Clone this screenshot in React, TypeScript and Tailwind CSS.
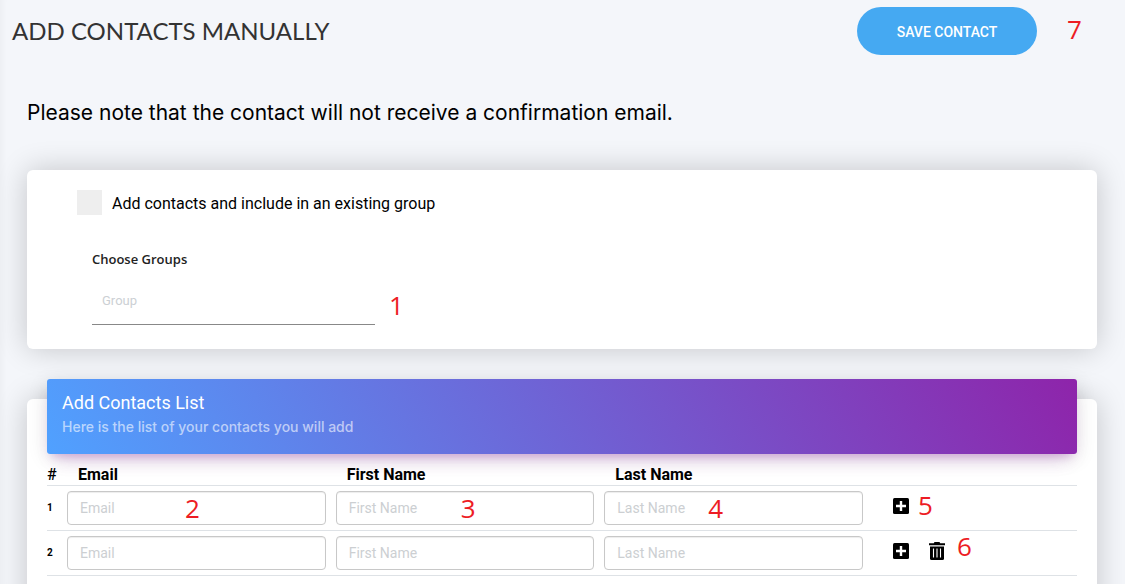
import { useState } from 'react';

type Contact = { id: number; email: string; first: string; last: string };

function Marker({ value, className }: { value: number; className: string }) {
  return (
    <span
      className={`pointer-events-none absolute font-['Open_Sans',sans-serif] text-[26px] leading-[26px] text-[#ed1c24] ${className}`}
    >
      {value}
    </span>
  );
}

function PlusSquare() {
  return (
    <svg viewBox="0 0 16 16" className="size-4" aria-hidden="true">
      <rect width="16" height="16" rx="1.5" fill="#000" />
      <path d="M6.8 3h2.4v3.8H13v2.4H9.2V13H6.8V9.2H3V6.8h3.8z" fill="#fff" />
    </svg>
  );
}

function Trash() {
  return (
    <svg viewBox="0 0 16 18" className="h-[18px] w-4" aria-hidden="true">
      <path d="M5.5 0h5l.7 1.2H16v2H0v-2h4.8z" fill="#000" />
      <path d="M1 4.6h14V16.5a1.5 1.5 0 0 1-1.5 1.5h-11A1.5 1.5 0 0 1 1 16.5z" fill="#000" />
      <path d="M4.5 6.6v9M8 6.6v9M11.5 6.6v9" stroke="#fff" strokeWidth="1.1" />
    </svg>
  );
}

const fieldClass =
  "block h-[34px] w-full rounded border border-[#c8c8c8] bg-white px-3 font-[Roboto,sans-serif] text-sm text-[#555] shadow-[inset_0_1px_1px_rgba(0,0,0,0.075)] outline-none placeholder:text-[#cccfd2]";

export default function App() {
  const [rows, setRows] = useState<Contact[]>([
    { id: 1, email: '', first: '', last: '' },
    { id: 2, email: '', first: '', last: '' },
  ]);

  const update = (id: number, key: 'email' | 'first' | 'last', value: string) =>
    setRows((list) => list.map((r) => (r.id === id ? { ...r, [key]: value } : r)));
  const add = () =>
    setRows((list) => [...list, { id: Math.max(...list.map((r) => r.id)) + 1, email: '', first: '', last: '' }]);
  const remove = (id: number) => setRows((list) => list.filter((r) => r.id !== id));

  return (
    <div className="h-screen overflow-hidden bg-[#f4f6fa] font-[Roboto,sans-serif] text-black shadow-[inset_8px_0_8px_-8px_rgba(0,0,0,0.06)]">
      <header className="flex items-start justify-between pt-[7px] pr-[88px] pl-3">
        <h1 className="font-[Lato,sans-serif] text-2xl leading-[48px] text-[#333]">ADD CONTACTS MANUALLY</h1>
        <div className="relative">
          <button
            type="button"
            className="h-12 w-[180px] rounded-full bg-[#45a9f2] pt-0.5 text-sm font-medium text-white"
          >
            SAVE CONTACT
          </button>
          <Marker value={7} className="top-[9px] left-[210px]" />
        </div>
      </header>

      <main className="pt-11 pr-7 pl-[27px]">
        <p className="font-[Inter,sans-serif] text-[21px] leading-7">
          Please note that the contact will not receive a confirmation email.
        </p>

        <section className="mt-[43px] rounded-md bg-white px-[50px] pt-5 pb-6 shadow-[0_0_30px_rgba(0,0,0,0.2)]">
          <label className="flex items-start gap-2.5 text-base">
            <input type="checkbox" className="size-[25px] appearance-none bg-[#eee] checked:bg-[#45a9f2]" />
            <span className="pt-0.5 leading-6">Add contacts and include in an existing group</span>
          </label>
          <div className="relative mt-[33px] ml-[15px] w-[283px]">
            <label
              htmlFor="group"
              className="block font-['Open_Sans',sans-serif] text-[13px] leading-5 font-semibold text-[#222]"
            >
              Choose Groups
            </label>
            <input
              id="group"
              placeholder="Group"
              className="mt-1.5 block h-[50px] w-full border-b border-[#888] px-2.5 pt-0.5 text-[13px] outline-none placeholder:text-[#ccd0d4]"
            />
            <Marker value={1} className="top-[43px] left-[297px]" />
          </div>
        </section>

        <section className="mt-[50px] rounded-md bg-white px-5 pb-10 shadow-[0_0_30px_rgba(0,0,0,0.2)]">
          <div className="relative -top-5 -mb-5 h-[75px] rounded-[3px] bg-linear-60/srgb from-[#50a1ff] to-[#8e24aa] px-[15px] pt-3 shadow-[0_12px_20px_-10px_rgba(156,39,176,0.28),0_4px_20px_0_rgba(0,0,0,0.12),0_7px_8px_-5px_rgba(156,39,176,0.2)]">
            <h2 className="text-lg leading-6 text-white">Add Contacts List</h2>
            <p className="font-[Inter,sans-serif] text-sm leading-6 font-medium text-white/60">
              Here is the list of your contacts you will add
            </p>
          </div>
          <table className="relative w-full table-fixed border-collapse">
            <thead>
              <tr className="h-[31px] border-b border-[#dee2e6] text-left align-top text-base leading-[18px]">
                <th className="w-[15px] pt-3 font-medium">#</th>
                <th className="pt-3 pl-4 font-bold">Email</th>
                <th className="pt-3 pl-4 font-bold">First Name</th>
                <th className="pt-3 pl-4 font-bold">Last Name</th>
                <th className="w-[209px]" aria-label="Actions" />
              </tr>
            </thead>
            <tbody>
              {rows.map((row, i) => (
                <tr key={row.id} className="h-[45px] border-b border-[#dee2e6]">
                  <th scope="row" className="text-left text-[10px] font-bold">
                    {i + 1}
                  </th>
                  <td className="relative px-[5px]">
                    <input
                      type="email"
                      aria-label={`Email ${i + 1}`}
                      placeholder="Email"
                      className={fieldClass}
                      value={row.email}
                      onChange={(e) => update(row.id, 'email', e.target.value)}
                    />
                    {i === 0 && <Marker value={2} className="top-[9px] left-[123px]" />}
                  </td>
                  <td className="relative px-[5px]">
                    <input
                      aria-label={`First name ${i + 1}`}
                      placeholder="First Name"
                      className={fieldClass}
                      value={row.first}
                      onChange={(e) => update(row.id, 'first', e.target.value)}
                    />
                    {i === 0 && <Marker value={3} className="top-[9px] left-[130px]" />}
                  </td>
                  <td className="relative px-[5px]">
                    <input
                      aria-label={`Last name ${i + 1}`}
                      placeholder="Last Name"
                      className={fieldClass}
                      value={row.last}
                      onChange={(e) => update(row.id, 'last', e.target.value)}
                    />
                    {i === 0 && <Marker value={4} className="top-[9px] left-[109px]" />}
                  </td>
                  <td className="relative pl-[25px]">
                    <div className="flex items-center gap-5 pb-1">
                      <button type="button" aria-label="Add row" onClick={add}>
                        <PlusSquare />
                      </button>
                      {i > 0 && (
                        <button type="button" aria-label="Delete row" onClick={() => remove(row.id)}>
                          <Trash />
                        </button>
                      )}
                    </div>
                    {i === 0 && <Marker value={5} className="top-1.5 left-[50px]" />}
                    {i === 1 && <Marker value={6} className="top-0.5 left-[89px]" />}
                  </td>
                </tr>
              ))}
            </tbody>
          </table>
        </section>
      </main>
    </div>
  );
}
